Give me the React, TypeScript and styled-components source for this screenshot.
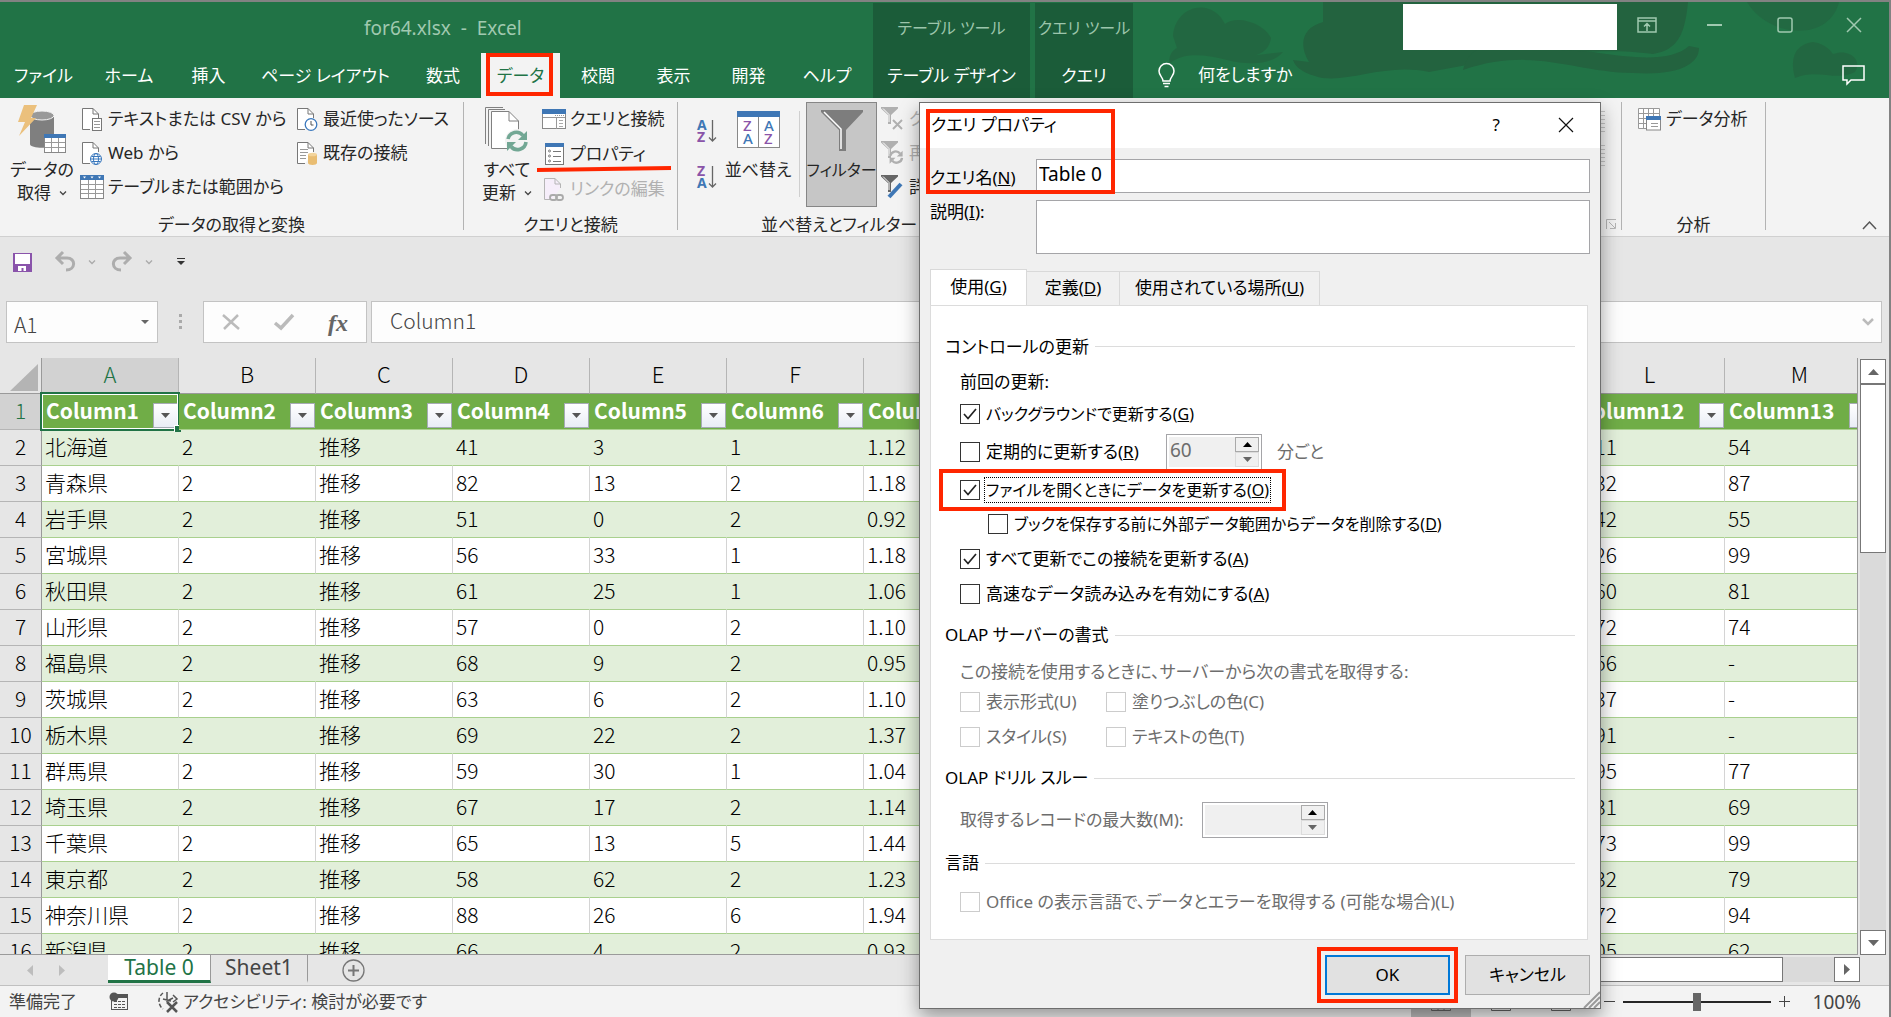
import React from "react";
import styled, { createGlobalStyle, css } from "styled-components";

const UI = `"Noto Sans", "Noto Sans CJK JP", sans-serif`;
const SHEET = `"Noto Sans CJK JP", sans-serif`;
const GREEN = "#217346";
const RED = "#ff2600";

const Global = createGlobalStyle`
  *, *::before, *::after { box-sizing: border-box; }
  body { margin: 0; background: #e6e6e6; }
  button, input, textarea { font: inherit; color: inherit; margin: 0; padding: 0; border: 0; background: none; border-radius: 0; font-feature-settings: inherit; }
  svg { display: block; flex: none; overflow: visible; }
`;

const Window = styled.div`
  position: relative;
  display: flex;
  flex-direction: column;
  height: 100vh;
  overflow: hidden;
  border-top: 2px solid #828282;
  border-right: 2px solid #828282;
  background: #e6e6e6;
  color: #262626;
  font-family: ${UI};
  font-size: 17px;
  line-height: 24px;
  font-feature-settings: "palt";
  white-space: nowrap;
`;

/* ---------- title bar and ribbon tabs ---------- */

const TopBar = styled.header`
  position: relative;
  display: flex;
  height: 96px;
  flex: none;
  background: ${GREEN};
  color: #fff;
`;
const Backdrop = styled.svg`
  position: absolute;
  right: 0;
  top: 0;
`;
const TabZone = styled.div`
  width: 873px;
  display: flex;
  flex-direction: column;
`;
const FileTitle = styled.div`
  height: 51px;
  padding: 14px 0 0 364px;
  color: #a0c9b0;
  font-size: 19px;
  white-space: pre;
`;
const TabRow = styled.nav`
  display: flex;
  flex: 1;
`;
const Tab = styled.button<{ $w: number; $on?: boolean }>`
  position: relative;
  width: ${(p) => p.$w}px;
  text-align: center;
  ${(p) => p.$on && css`background: #f3f3f3; color: ${GREEN};`}
`;
const ToolTabs = styled.div<{ $w: number }>`
  position: relative;
  display: flex;
  flex-direction: column;
  width: ${(p) => p.$w}px;
  margin: 1px 5px 0 0;
  background: #1b5c39;
`;
const ToolTitle = styled.div`
  height: 50px;
  padding-top: 13px;
  text-align: center;
  font-size: 16px;
  color: #9cc5ab;
`;
const ToolTab = styled.button`
  flex: 1;
`;
const RightTop = styled.div`
  position: relative;
  flex: 1;
  display: flex;
  flex-direction: column;
`;
const WindowRow = styled.div`
  display: flex;
  height: 50px;
  justify-content: flex-end;
`;
const Account = styled.div`
  width: 214px;
  height: 46px;
  margin-top: 2px;
  background: #fff;
`;
const WinButton = styled.button<{ $w: number }>`
  width: ${(p) => p.$w}px;
  height: 46px;
  display: flex;
  align-items: center;
  justify-content: center;
`;
const TellRow = styled.div`
  flex: 1;
  display: flex;
  align-items: center;
  gap: 23px;
  padding: 0 24px 0 20px;
`;
const CommentButton = styled.button`
  margin-left: auto;
`;

/* ---------- ribbon ---------- */

const Ribbon = styled.section`
  position: relative;
  display: flex;
  flex: none;
  height: 139px;
  padding: 4px 0 6px;
  background: #f3f3f3;
  border-bottom: 1px solid #d0d0d0;
`;
const Group = styled.div<{ $w?: number; $line?: boolean }>`
  display: flex;
  flex-direction: column;
  flex: ${(p) => (p.$w ? `0 0 ${p.$w}px` : "1 1 0")};
  min-width: 0;
  border-right: ${(p) => (p.$line ? "1px solid #b3b3b3" : "0")};
`;
const GroupBody = styled.div<{ $pad?: number }>`
  display: flex;
  flex: none;
  height: 105px;
  padding-left: ${(p) => p.$pad || 0}px;
`;
const GroupLabel = styled.div<{ $pad?: number }>`
  display: flex;
  justify-content: center;
  margin-top: 8px;
  padding-right: ${(p) => p.$pad || 0}px;
  line-height: 20px;
`;
const Large = styled.button<{ $w: number; $on?: boolean }>`
  display: flex;
  flex-direction: column;
  align-items: center;
  flex: none;
  width: ${(p) => p.$w}px;
  height: 105px;
  line-height: 23px;
  ${(p) => p.$on && css`background: #c6c6c6; border: 1px solid #868686; font-size: 16px;`}
`;
const LargeIcon = styled.span`
  display: flex;
  align-items: center;
  justify-content: center;
  height: 56px;
`;
const DropLine = styled.span`
  display: flex;
  align-items: center;
  gap: 8px;
`;
const Column = styled.div<{ $pad?: number; $gap?: number }>`
  display: flex;
  flex-direction: column;
  gap: ${(p) => p.$gap || 0}px;
  padding-left: ${(p) => p.$pad || 0}px;
`;
const Small = styled.button<{ $off?: boolean; $w?: number }>`
  display: flex;
  align-items: center;
  gap: 4px;
  height: 34px;
  width: ${(p) => (p.$w ? `${p.$w}px` : "auto")};
  color: ${(p) => (p.$off ? "#b1b1b1" : "inherit")};
`;
const IconBox = styled.span`
  display: flex;
  justify-content: center;
  width: 24px;
`;
const SortPair = styled.div`
  display: flex;
  flex-direction: column;
  gap: 22px;
  width: 47px;
  padding: 17px 0 0 19px;
`;
const InnerRule = styled.div`
  width: 1px;
  height: 86px;
  margin: 9px 6px 0 8px;
  background: #cfcfcf;
`;
const Collapse = styled.button`
  margin: auto 12px 0 auto;
`;

/* ---------- quick access and formula bar ---------- */

const Quick = styled.div`
  display: flex;
  flex: none;
  align-items: center;
  height: 64px;
  padding: 0 0 14px 13px;
  color: #a9a9a9;
`;
const QuickButton = styled.button<{ $w: number }>`
  width: ${(p) => p.$w}px;
`;
const FormulaRow = styled.div`
  display: flex;
  flex: none;
  height: 57px;
  padding: 0 7px 15px 6px;
  color: #444;
  font-family: ${SHEET};
  font-size: 21px;
  font-weight: 300;
`;
const Boxed = styled.div<{ $w?: number }>`
  display: flex;
  align-items: center;
  flex: ${(p) => (p.$w ? `0 0 ${p.$w}px` : "1 1 0")};
  min-width: 0;
  background: #fdfdfd;
  border: 1px solid #c3c3c3;
`;
const NameInput = styled.input`
  flex: 1;
  min-width: 0;
  padding: 3px 0 0 7px;
`;
const FormulaInput = styled.input`
  flex: 1;
  min-width: 0;
  padding: 0 0 4px 18px;
`;
const Dots = styled.div`
  width: 45px;
  display: flex;
  align-items: center;
  justify-content: center;
`;
const FxTools = styled.div`
  display: flex;
  flex: 1;
  align-items: center;
  justify-content: space-between;
  padding: 0 18px;
`;
const Fx = styled.span`
  font: italic bold 24px/24px "Liberation Serif", serif;
  color: #666;
`;
const Spacer = styled.div`
  width: 4px;
`;

/* ---------- grid ---------- */

const SheetArea = styled.main`
  display: flex;
  flex: 1;
  min-height: 0;
`;
const GridClip = styled.div`
  flex: 1;
  min-width: 0;
  overflow: hidden;
  border-right: 1px solid #9a9a9a;
  border-bottom: 1px solid #9a9a9a;
`;
const Grid = styled.table`
  width: 1875px;
  table-layout: fixed;
  border-collapse: separate;
  border-spacing: 0;
  font-family: ${SHEET};
  font-size: 21px;
  font-weight: 300;
  line-height: 30px;
  color: #000;
  font-feature-settings: normal;
`;
const Col = styled.col<{ $w: number }>`
  width: ${(p) => p.$w}px;
`;
const ColHead = styled.th<{ $on?: boolean }>`
  height: 36px;
  padding: 0 0 5px;
  font-size: 22px;
  font-weight: 300;
  border-right: 1px solid #b5b5b5;
  border-bottom: 1px solid #9a9a9a;
  background: ${(p) => (p.$on ? "#d2d2d2" : "#e6e6e6")};
  color: ${(p) => (p.$on ? GREEN : "#000")};
`;
const Corner = styled.td`
  padding: 4px 3px 0 10px;
  background: #e6e6e6;
  border-right: 1px solid #9a9a9a;
  border-bottom: 1px solid #9a9a9a;
`;
const RowHead = styled.th<{ $on?: boolean }>`
  height: 36px;
  padding: 0 0 4px;
  font-weight: 300;
  border-right: 1px solid #9a9a9a;
  border-bottom: 1px solid #b5b5b5;
  background: ${(p) => (p.$on ? "#d2d2d2" : "#e6e6e6")};
  color: ${(p) => (p.$on ? GREEN : "#000")};
`;
const FieldHead = styled.th`
  position: relative;
  height: 36px;
  padding: 0;
  background: #70ad47;
  border-bottom: 1px solid #a9d08e;
  color: #fff;
  font-weight: 700;
  text-align: left;
`;
const FieldInner = styled.div`
  display: flex;
  align-items: center;
  justify-content: space-between;
  padding: 0 1px 4px 4px;
  height: 35px;
`;
const FilterArrow = styled.button`
  display: flex;
  align-items: center;
  justify-content: center;
  width: 25px;
  height: 25px;
  margin-top: 11px;
  border: 1px solid #a6abb5;
  background: linear-gradient(#fff, #e9edf5);
`;
const Selection = styled.div`
  position: absolute;
  inset: -2px -1px -2px -2px;
  border: 2px solid ${GREEN};
  box-shadow: inset 0 0 0 1px #fff;
  pointer-events: none;
  &::after {
    content: "";
    position: absolute;
    right: -3px;
    bottom: -3px;
    width: 7px;
    height: 7px;
    background: ${GREEN};
    border-left: 1px solid #fff;
    border-top: 1px solid #fff;
  }
`;
const Cell = styled.td<{ $band: boolean }>`
  height: 36px;
  padding: 0 0 4px 3px;
  background: ${(p) => (p.$band ? "#e2efda" : "#fff")};
  border-bottom: 1px solid #a9d08e;
  border-right: 1px solid ${(p) => (p.$band ? "#e2efda" : "#d4d4d4")};
`;

const VScroll = styled.div`
  width: 31px;
  display: flex;
  flex-direction: column;
  padding: 1px 3px 0 2px;
`;
const ScrollButton = styled.button`
  display: flex;
  align-items: center;
  justify-content: center;
  width: 26px;
  height: 25px;
  flex: none;
  background: #fff;
  border: 1px solid #777;
`;
const VTrack = styled.div`
  flex: 1;
  background: #dadada;
`;
const VThumb = styled.div`
  height: 31%;
  background: #fff;
  border: 1px solid #777;
`;

/* ---------- sheet tabs and status bar ---------- */

const SheetBar = styled.div`
  display: flex;
  flex: none;
  height: 31px;
  border-bottom: 1px solid #c0c0c0;
  font-size: 21px;
`;
const SheetNav = styled.div`
  display: flex;
  align-items: center;
  gap: 26px;
  width: 108px;
  padding-left: 27px;
`;
const SheetTab = styled.button<{ $on?: boolean }>`
  width: ${(p) => (p.$on ? 103 : 97)}px;
  height: 28px;
  padding-bottom: 4px;
  border-right: 1px solid #999;
  border-bottom: 3px solid ${(p) => (p.$on ? GREEN : "transparent")};
  background: ${(p) => (p.$on ? "#fff" : "none")};
  color: ${(p) => (p.$on ? GREEN : "#444")};
`;
const AddSheet = styled.button`
  margin-left: 34px;
`;
const HScroll = styled.div`
  display: flex;
  width: 860px;
  height: 25px;
  margin: 2px 29px 0 auto;
`;
const HTrack = styled.div`
  flex: 1;
  background: #dadada;
`;
const HThumb = styled.div`
  width: 783px;
  height: 25px;
  background: #fff;
  border: 1px solid #777;
`;
const Status = styled.footer`
  display: flex;
  flex: none;
  align-items: center;
  height: 31px;
  padding: 0 28px 0 9px;
  background: #f3f3f3;
  color: #444;
`;
const StatusItem = styled.span<{ $w?: number }>`
  display: flex;
  align-items: center;
  gap: 4px;
  width: ${(p) => (p.$w ? `${p.$w}px` : "auto")};
`;
const Views = styled.div`
  display: flex;
  margin-left: auto;
  padding-right: 13px;
`;
const ViewButton = styled.button<{ $on?: boolean }>`
  display: flex;
  align-items: center;
  justify-content: center;
  width: 60px;
  height: 31px;
  background: ${(p) => (p.$on ? "#bdbdbd" : "transparent")};
`;
const Zoom = styled.div`
  display: flex;
  align-items: center;
  gap: 8px;
`;
const ZoomSlider = styled.input`
  appearance: none;
  width: 148px;
  height: 18px;
  background: linear-gradient(#262626, #262626) center / 100% 2px no-repeat;
  &::-webkit-slider-thumb {
    appearance: none;
    width: 8px;
    height: 18px;
    background: #666;
  }
`;
const ZoomValue = styled.span`
  width: 63px;
  font-size: 19px;
  text-align: right;
`;

/* ---------- dialog ---------- */

const Dialog = styled.section`
  position: absolute;
  left: 919px;
  top: 100px;
  width: 682px;
  display: flex;
  flex-direction: column;
  background: #f0f0f0;
  border: 1px solid #6e6e6e;
  box-shadow: 0 8px 18px rgba(0, 0, 0, 0.38);
  color: #000;
`;
const DialogTitle = styled.div`
  display: flex;
  align-items: center;
  height: 45px;
  padding: 0 26px 2px 11px;
  background: #fff;
`;
const DialogIcons = styled.div`
  display: flex;
  align-items: center;
  gap: 58px;
  margin-left: auto;
`;
const Fields = styled.div`
  display: grid;
  grid-template-columns: 106px 1fr;
  row-gap: 7px;
  padding: 11px 10px 0;
`;
const FieldLabel = styled.label<{ $top: number }>`
  padding-top: ${(p) => p.$top}px;
`;
const NameField = styled.input`
  height: 34px;
  min-width: 0;
  padding: 0 0 4px 2px;
  background: #fff;
  border: 1px solid #a5a5a8;
  font-size: 19px;
`;
const DescField = styled.textarea`
  height: 54px;
  resize: none;
  background: #fff;
  border: 1px solid #a5a5a8;
`;
const DialogTabs = styled.div`
  display: flex;
  align-items: flex-end;
  height: 36px;
  margin: 15px 0 0 10px;
`;
const DialogTab = styled.button<{ $on?: boolean; $w: number }>`
  width: ${(p) => p.$w}px;
  height: ${(p) => (p.$on ? 37 : 34)}px;
  margin-bottom: ${(p) => (p.$on ? -1 : 0)}px;
  padding-bottom: 2px;
  background: ${(p) => (p.$on ? "#fff" : "#f0f0f0")};
  border: 1px solid #d9d9d9;
  border-bottom: 0;
  border-left-width: ${(p) => (p.$on ? 1 : 0)}px;
`;
const Panel = styled.div`
  margin: 0 12px 0 10px;
  padding: 23px 12px 24px 14px;
  background: #fff;
  border: 1px solid #dcdcdc;
`;
const Heading = styled.h2<{ $h: number }>`
  display: flex;
  align-items: center;
  gap: 6px;
  height: ${(p) => p.$h}px;
  margin: 0;
  font-size: 17px;
  font-weight: 400;
  &::after {
    content: "";
    flex: 1;
    height: 1px;
    background: #dcdcdc;
  }
`;
const Line = styled.div<{ $h: number; $off?: boolean; $indent?: boolean; $dense?: boolean }>`
  position: relative;
  display: flex;
  align-items: center;
  height: ${(p) => p.$h}px;
  padding-left: ${(p) => (p.$indent ? 43 : 15)}px;
  color: ${(p) => (p.$off ? "#6d6d6d" : "#000")};
  font-size: ${(p) => (p.$dense ? 16 : 17)}px;
`;
const CheckLabel = styled.label<{ $w?: number }>`
  display: flex;
  align-items: center;
  gap: 5px;
  width: ${(p) => (p.$w ? `${p.$w}px` : "auto")};
`;
const CheckWrap = styled.span`
  position: relative;
  width: 20px;
  height: 20px;
`;
const CheckInput = styled.input`
  appearance: none;
  display: block;
  width: 20px;
  height: 20px;
  background: #fff;
  border: 1px solid #333;
  &:disabled { border-color: #ccc; }
`;
const Tick = styled.svg`
  position: absolute;
  left: 0;
  top: 0;
  pointer-events: none;
`;
const CheckText = styled.span<{ $focus?: boolean }>`
  outline: ${(p) => (p.$focus ? "1px dotted #000" : "0")};
  line-height: 24px;
  padding: 0 1px;
`;
const SpinBox = styled.span<{ $w: number; $ml: number }>`
  display: flex;
  width: ${(p) => p.$w}px;
  height: 36px;
  margin-left: ${(p) => p.$ml}px;
  padding: 2px;
  border: 1px solid #a5a5a8;
  background: #fff;
`;
const SpinInput = styled.input`
  flex: 1;
  min-width: 0;
  padding: 0 0 4px 1px;
  background: #f0f0f0;
  color: #6d6d6d;
  font-size: 19px;
`;
const SpinButtons = styled.span`
  display: flex;
  flex-direction: column;
  width: 24px;
  background: #f0f0f0;
`;
const SpinButton = styled.button<{ $up?: boolean }>`
  display: flex;
  align-items: center;
  justify-content: center;
  flex: 1;
  border: 1px solid ${(p) => (p.$up ? "#a9a9a9" : "#dcdcdc")};
`;
const Unit = styled.span`
  margin-left: 15px;
  color: #6d6d6d;
`;
const Footer = styled.div`
  display: flex;
  justify-content: flex-end;
  gap: 15px;
  padding: 15px 10px 13px 0;
`;
const PushButton = styled.button<{ $main?: boolean }>`
  position: relative;
  width: 125px;
  height: 40px;
  background: #e1e1e1;
  border: ${(p) => (p.$main ? "2px solid #0078d7" : "1px solid #adadad")};
`;
const Grip = styled.svg`
  position: absolute;
  right: 0;
  bottom: 0;
  overflow: hidden;
`;

/* ---------- red annotations ---------- */

const Mark = styled.span<{ $inset: string }>`
  position: absolute;
  inset: ${(p) => p.$inset};
  border: 4px solid ${RED};
  pointer-events: none;
`;
const Underline = styled.svg`
  position: absolute;
  left: 537px;
  top: 67px;
`;

/* ---------- icons ---------- */

const Chevron = ({ c = "#444", s = 8 }: { c?: string; s?: number }) => (
  <svg width={s} height={s} viewBox="0 0 8 8" fill="none" stroke={c} strokeWidth="1.3"><path d="M1 2.5 4 5.5 7 2.5" /></svg>
);
const Tri = ({ d, c = "#666", w = 11, h = 6 }: { d: "up" | "down" | "left" | "right"; c?: string; w?: number; h?: number }) => {
  const p = { up: `0,${h} ${w / 2},0 ${w},${h}`, down: `0,0 ${w},0 ${w / 2},${h}`, left: `${w},0 ${w},${h} 0,${h / 2}`, right: `0,0 ${w},${h / 2} 0,${h}` }[d];
  return <svg width={w} height={h}><polygon points={p} fill={c} /></svg>;
};
const Page = ({ children, off }: { children?: React.ReactNode; off?: boolean }) => (
  <svg width="22" height="25" viewBox="0 0 22 25" fill="none">
    <path d="M9 22.5H1.5V1.5H12L17.5 7V11" fill={off ? "#f6eefa" : "#fff"} stroke={off ? "#b5b5b5" : "#777"} />
    <path d="M12 1.5V7H17.5" stroke={off ? "#b5b5b5" : "#777"} />
    {children}
  </svg>
);
const TextFile = () => (
  <Page><rect x="11.5" y="11.5" width="9" height="12" fill="#fff" stroke="#777" /><path d="M13 14.5H19M13 17.5H19M13 20.5H19" stroke="#999" /></Page>
);
const WebFile = () => (
  <Page><circle cx="15" cy="18" r="5.5" fill="#fff" stroke="#3a78bd" /><path d="M9.5 18H20.5M10.5 15.5H19.5M10.5 20.5H19.5" stroke="#3a78bd" /><ellipse cx="15" cy="18" rx="2.5" ry="5.5" stroke="#3a78bd" /></Page>
);
const RecentFile = () => (
  <Page><circle cx="15" cy="17.5" r="5.8" fill="#fff" stroke="#3a78bd" strokeWidth="1.3" /><path d="M15 14V18H17.5" stroke="#555" /></Page>
);
const ExistingFile = () => (
  <Page><path d="M4 8.5H12M4 11.5H12M4 14.5H10M4 17.5H10" stroke="#999" /><path d="M12 13.5V22C12 24.5 21 24.5 21 22V13.5Z" fill="#e9bd72" /><ellipse cx="16.5" cy="13.5" rx="4.5" ry="1.8" fill="#f3d49b" /></Page>
);
const LinkFile = () => (
  <Page off><rect x="7" y="18" width="7" height="5" rx="2.5" stroke="#aaa" strokeWidth="1.8" /><rect x="13" y="18" width="7" height="5" rx="2.5" stroke="#aaa" strokeWidth="1.8" /></Page>
);
const TableIcon = () => (
  <svg width="24" height="24" fill="none"><rect x=".5" y=".5" width="23" height="23" fill="#fff" stroke="#888" /><rect width="24" height="5" fill="#3f77b5" /><path d="M3 1.5H6L4.5 3.5ZM10.5 1.5H13.5L12 3.5ZM18 1.5H21L19.5 3.5Z" fill="#fff" /><path d="M1 9.5H23M1 14.5H23M1 18.5H23M8.5 5V23M15.5 5V23" stroke="#999" /></svg>
);
const GetData = () => (
  <svg width="49" height="50" fill="none">
    <path d="M12 11V39C12 44 36 44 36 39V11Z" fill="#7f7f7f" />
    <ellipse cx="24" cy="10.5" rx="12" ry="4.5" fill="#999" stroke="#f3f3f3" />
    <path d="M6 0H19L13 13H18L1 31 7 17H0Z" fill="#ebc07c" />
    <rect x="26.5" y="29.5" width="21" height="18" fill="#fff" stroke="#888" /><rect x="26" y="29" width="22" height="4" fill="#3f77b5" />
    <path d="M27 37.5H47M27 42.5H47M33.5 33V47M40.5 33V47" stroke="#999" />
  </svg>
);
const RefreshArrows = ({ c, s, x, y }: { c: string; s: number; x: number; y: number }) => (
  <g transform={`translate(${x} ${y}) scale(${s})`}>
    <path d="M2 9A8.5 8.5 0 0 1 17 5.5" stroke={c} strokeWidth="3.6" fill="none" /><path d="M21 1V10H12Z" fill={c} />
    <path d="M20 12A8.5 8.5 0 0 1 5 16.5" stroke={c} strokeWidth="3.6" fill="none" /><path d="M1 21V12H10Z" fill={c} />
  </g>
);
const RefreshAll = () => (
  <svg width="44" height="46" fill="none" stroke="#808080">
    <path d="M.5 37V.5H18" /><path d="M3.5 39V2.5H20" />
    <path d="M6.5 41.5V4.5H24L33.5 14V41.5Z" fill="#fff" /><path d="M24 4.5V14H33.5" />
    <circle cx="32" cy="34" r="12" fill="#f3f3f3" stroke="none" />
    <g stroke="none"><RefreshArrows c="#72a794" s={1} x={21} y={23} /></g>
  </svg>
);
const QueriesIcon = () => (
  <svg width="24" height="21" fill="none"><rect x=".5" y=".5" width="23" height="19" fill="#fff" stroke="#888" /><rect width="24" height="5" fill="#3f77b5" /><path d="M1 8.5H23M14.5 9V20" stroke="#999" /><path d="M17 11.5H21M17 14.5H21M17 17.5H21" stroke="#aaa" /><path d="M13 6.5H22" stroke="#999" strokeDasharray="1 1" /></svg>
);
const PropsIcon = () => (
  <svg width="19" height="22" fill="none"><rect x=".5" y=".5" width="18" height="21" fill="#fff" stroke="#777" /><rect width="19" height="4" fill="#3f77b5" /><g stroke="#777"><circle cx="4.5" cy="8" r="1" /><circle cx="4.5" cy="13" r="1" /><circle cx="4.5" cy="18" r="1" /><path d="M8 8.5H16M8 13.5H16M8 18.5H16" /></g></svg>
);
const SortIcon = ({ desc }: { desc?: boolean }) => (
  <svg width="20" height="24" fontFamily="Noto Sans" fontWeight="700" fontSize="14">
    <text x="0" y="11" fill={desc ? "#8a54a8" : "#3f77b5"}>{desc ? "Z" : "A"}</text>
    <text x="0" y="23" fill={desc ? "#3f77b5" : "#8a54a8"}>{desc ? "A" : "Z"}</text>
    <path d="M15.5 1V22M12 18.5 15.5 22 19 18.5" stroke="#666" strokeWidth="1.3" fill="none" />
  </svg>
);
const SortDialog = () => (
  <svg width="43" height="38" fontFamily="Noto Sans" fontWeight="500" fontSize="15"><rect x=".5" y=".5" width="42" height="36" fill="#fff" stroke="#888" /><rect width="43" height="6" fill="#3f77b5" /><path d="M21.5 6V36" stroke="#888" />
    <text x="6" y="20" fill="#8a54a8">Z</text><text x="6" y="33" fill="#3f77b5">A</text><text x="27" y="20" fill="#3f77b5">A</text><text x="27" y="33" fill="#8a54a8">Z</text></svg>
);
const Funnel = () => (
  <svg width="42" height="42"><path d="M0 0H42V2L25 20V41H18V20L0 2Z" fill="#7d7d7d" /><path d="M3 2 20 19V39" stroke="#fff" strokeWidth="1.5" fill="none" /></svg>
);
const SmallFunnel = ({ kind }: { kind: "clear" | "again" | "more" }) => {
  const c = kind === "more" ? "#666" : "#b0b0b0";
  return (
    <svg width="24" height="24" fill="none"><path d="M0 0H17V1.5L10 8V17H7V8L0 1.5Z" fill={c} /><path d="M2 1.5 8 7.5V15" stroke="#fff" />
      {kind === "clear" && <path d="M12 13 21 22M21 13 12 22" stroke={c} strokeWidth="2" />}
      {kind === "again" && <RefreshArrows c={c} s={0.65} x={8} y={9} />}
      {kind === "more" && <path d="M8 22 20 9" stroke="#3f77b5" strokeWidth="4" />}</svg>
  );
};
const Analysis = () => (
  <svg width="24" height="23" fill="none"><path d="M.5 .5H21.5V20.5H.5ZM.5 5.5H21M.5 10.5H21M.5 15.5H21M5.5 .5V20M10.5 .5V20M15.5 .5V20" stroke="#999" fill="#fff" /><rect x="8.5" y="8.5" width="14" height="13.5" fill="#fff" stroke="#888" /><rect x="8" y="8" width="15" height="4" fill="#3f77b5" /><path d="M13 15.5H20M13 18.5H20" stroke="#999" /></svg>
);
const Hint = () => (
  <svg width="17" height="25" fill="none" stroke="#fff" strokeWidth="1.5"><path d="M5 18C5 14 1 13 1 8A7.5 7.5 0 0 1 16 8C16 13 12 14 12 18ZM5 20.5H12M6.5 23.5H10.5" /></svg>
);
const Undo = () => (
  <svg width="22" height="20" fill="none" stroke="#adadad" strokeWidth="3"><path d="M9 0 3 6 9 12M3 6H13C22 6 22 18 12 18" /></svg>
);
const Redo = () => (
  <svg width="22" height="20" fill="none" stroke="#adadad" strokeWidth="3"><path d="M13 0 19 6 13 12M19 6H9C0 6 0 18 10 18" /></svg>
);

/* ---------- data ---------- */

const columns: { letter: string; name: string; w: number }[] = [
  { letter: "A", name: "Column1", w: 137 },
  { letter: "B", name: "Column2", w: 137 },
  { letter: "C", name: "Column3", w: 137 },
  { letter: "D", name: "Column4", w: 137 },
  { letter: "E", name: "Column5", w: 137 },
  { letter: "F", name: "Column6", w: 137 },
  { letter: "", name: "Column7", w: 137 },
  { letter: "", name: "", w: 137 },
  { letter: "", name: "", w: 137 },
  { letter: "", name: "", w: 150 },
  { letter: "", name: "", w: 150 },
  { letter: "L", name: "Column12", w: 150 },
  { letter: "M", name: "Column13", w: 150 },
];
const rows: [string, string, string, string, string, string, string][] = [
  ["北海道", "41", "3", "1", "1.12", "1.11", "54"],
  ["青森県", "82", "13", "2", "1.18", "1.32", "87"],
  ["岩手県", "51", "0", "2", "0.92", "1.42", "55"],
  ["宮城県", "56", "33", "1", "1.18", "1.26", "99"],
  ["秋田県", "61", "25", "1", "1.06", "1.60", "81"],
  ["山形県", "57", "0", "2", "1.10", "1.72", "74"],
  ["福島県", "68", "9", "2", "0.95", "1.56", "-"],
  ["茨城県", "63", "6", "2", "1.10", "1.37", "-"],
  ["栃木県", "69", "22", "2", "1.37", "1.91", "-"],
  ["群馬県", "59", "30", "1", "1.04", "1.95", "77"],
  ["埼玉県", "67", "17", "2", "1.14", "1.31", "69"],
  ["千葉県", "65", "13", "5", "1.44", "1.73", "99"],
  ["東京都", "58", "62", "2", "1.23", "1.32", "79"],
  ["神奈川県", "88", "26", "6", "1.94", "1.72", "94"],
  ["新潟県", "66", "4", "2", "0.93", "1.05", "62"],
];
const tabs: [string, number][] = [
  ["ファイル", 87], ["ホーム", 84], ["挿入", 75], ["ページ レイアウト", 159], ["数式", 76], ["データ", 79],
  ["校閲", 76], ["表示", 75], ["開発", 75], ["ヘルプ", 82],
];

const Check = ({ text, k, checked, off, focus, w }: { text: string; k?: string; checked?: boolean; off?: boolean; focus?: boolean; w?: number }) => (
  <CheckLabel $w={w}>
    <CheckWrap>
      <CheckInput type="checkbox" defaultChecked={checked} disabled={off} />
      {checked && <Tick width="20" height="20" fill="none" stroke="#222" strokeWidth="1.7"><path d="M4 10 8 14.5 16 5" /></Tick>}
    </CheckWrap>
    <CheckText $focus={focus}>{text}{k && <>(<u>{k}</u>)</>}</CheckText>
  </CheckLabel>
);
const Spin = ({ value, w, ml, label }: { value: string; w: number; ml: number; label: string }) => (
  <SpinBox $w={w} $ml={ml}>
    <SpinInput aria-label={label} defaultValue={value} disabled />
    <SpinButtons>
      <SpinButton $up aria-label="増やす"><Tri d="up" c="#000" w={9} h={5} /></SpinButton>
      <SpinButton aria-label="減らす"><Tri d="down" w={9} h={5} /></SpinButton>
    </SpinButtons>
  </SpinBox>
);

function QueryDialog() {
  return (
    <Dialog role="dialog" aria-label="クエリ プロパティ">
      <DialogTitle>
        クエリ プロパティ
        <DialogIcons>
          <button>?</button>
          <button aria-label="閉じる"><svg width="16" height="16" stroke="#111" strokeWidth="1.2"><path d="M1 1 15 15M15 1 1 15" /></svg></button>
        </DialogIcons>
      </DialogTitle>
      <Fields>
        <FieldLabel htmlFor="qname" $top={7}>クエリ名(<u>N</u>)</FieldLabel>
        <NameField id="qname" defaultValue="Table 0" />
        <FieldLabel htmlFor="qdesc" $top={0}>説明(<u>I</u>):</FieldLabel>
        <DescField id="qdesc" />
      </Fields>
      <DialogTabs>
        <DialogTab $on $w={97}>使用(<u>G</u>)</DialogTab>
        <DialogTab $w={93}>定義(<u>D</u>)</DialogTab>
        <DialogTab $w={200}>使用されている場所(<u>U</u>)</DialogTab>
      </DialogTabs>
      <Panel>
        <Heading $h={35}>コントロールの更新</Heading>
        <Line $h={35}>前回の更新:</Line>
        <Line $h={30} $dense><Check checked text="バックグラウンドで更新する" k="G" /></Line>
        <Line $h={45}><Check w={191} text="定期的に更新する" k="R" /><Spin label="更新間隔" value="60" w={96} ml={15} /><Unit>分ごと</Unit></Line>
        <Line $h={32} $dense><Check checked focus text="ファイルを開くときにデータを更新する" k="O" /><Mark $inset="-5px 289px -5px -6px" /></Line>
        <Line $h={35} $indent $dense><Check text="ブックを保存する前に外部データ範囲からデータを削除する" k="D" /></Line>
        <Line $h={35}><Check checked text="すべて更新でこの接続を更新する" k="A" /></Line>
        <Line $h={35}><Check text="高速なデータ読み込みを有効にする" k="A" /></Line>
        <Heading $h={48}>OLAP サーバーの書式</Heading>
        <Line $h={25} $off>この接続を使用するときに、サーバーから次の書式を取得する:</Line>
        <Line $h={35} $off><Check off w={146} text="表示形式(U)" /><Check off text="塗りつぶしの色(C)" /></Line>
        <Line $h={35} $off><Check off w={146} text="スタイル(S)" /><Check off text="テキストの色(T)" /></Line>
        <Heading $h={48}>OLAP ドリル スルー</Heading>
        <Line $h={36} $off>取得するレコードの最大数(M):<Spin label="取得するレコードの最大数" value="" w={126} ml={18} /></Line>
        <Heading $h={50}>言語</Heading>
        <Line $h={27} $off><Check off text="Office の表示言語で、データとエラーを取得する (可能な場合)(L)" /></Line>
      </Panel>
      <Footer>
        <PushButton $main>OK<Mark $inset="-10px" /></PushButton>
        <PushButton>キャンセル</PushButton>
      </Footer>
      <Grip width="18" height="18" stroke="#9a9a9a" strokeWidth="2"><path d="M2 18 18 2M7 18 18 7M12 18 18 12" /></Grip>
      <Mark $inset="6px 485px 814px 6px" />
    </Dialog>
  );
}

export default function App() {
  return (
    <Window>
      <Global />
      <TopBar>
        <Backdrop width="756" height="96" fill="#23633f">
          <path d="M40 34C42 4 78 -6 92 22 104 12 132 22 138 36 136 50 124 54 116 54L150 50C140 62 118 64 94 58 70 52 50 50 36 62 36 52 40 48 44 46Z" opacity=".7" />
          <path d="M190 0H555C552 32 545 48 520 52 470 46 452 52 370 52L350 60 296 70C250 60 210 84 182 74 168 70 162 64 160 58L176 60C166 44 168 26 190 20Z" />
          <path d="M330 68C334 54 340 46 360 44L460 50C510 58 540 58 556 44L566 46C566 62 546 74 500 71 440 70 400 44 330 68Z" />
          <path d="M662 76C656 54 664 42 680 40 694 42 698 50 700 52 716 46 730 58 722 70 704 80 684 66 662 76Z" opacity=".7" />
          <path d="M614 0H706C700 24 676 34 648 26 630 20 620 10 614 0Z" opacity=".6" />
        </Backdrop>
        <TabZone>
          <FileTitle>{"for64.xlsx  -  Excel"}</FileTitle>
          <TabRow>
            {tabs.map(([t, w]) => (
              <Tab key={t} $w={w} $on={t === "データ"}>{t}{t === "データ" && <Mark $inset="0 7px 2px 5px" />}</Tab>
            ))}
          </TabRow>
        </TabZone>
        <ToolTabs $w={157}><ToolTitle>テーブル ツール</ToolTitle><ToolTab>テーブル デザイン</ToolTab></ToolTabs>
        <ToolTabs $w={98}><ToolTitle>クエリ ツール</ToolTitle><ToolTab>クエリ</ToolTab></ToolTabs>
        <RightTop>
          <WindowRow>
            <Account />
            <WinButton $w={60} aria-label="リボンの表示オプション"><svg width="20" height="16" fill="none" stroke="#a0c9b0" strokeWidth="1.5"><path d="M1 1H19V15H1ZM1 4H19M10 14V7M7 9.5 10 6.5 13 9.5" /></svg></WinButton>
            <WinButton $w={74} aria-label="最小化"><svg width="15" height="2"><path d="M0 1H15" stroke="#a0c9b0" strokeWidth="2" /></svg></WinButton>
            <WinButton $w={68} aria-label="最大化"><svg width="16" height="16" fill="none" stroke="#a0c9b0" strokeWidth="1.5"><rect x="1" y="1" width="14" height="14" rx="2" /></svg></WinButton>
            <WinButton $w={70} aria-label="閉じる"><svg width="16" height="16" stroke="#a0c9b0" strokeWidth="1.5"><path d="M1 1 15 15M15 1 1 15" /></svg></WinButton>
          </WindowRow>
          <TellRow>
            <Hint />
            <span>何をしますか</span>
            <CommentButton aria-label="コメント"><svg width="23" height="21" fill="none" stroke="#fff" strokeWidth="1.5"><path d="M1 1H22V15H9L5 19V15H1Z" /></svg></CommentButton>
          </TellRow>
        </RightTop>
      </TopBar>

      <Ribbon>
        <Group $w={464} $line>
          <GroupBody $pad={4}>
            <Large $w={76}><LargeIcon><GetData /></LargeIcon><span>データの</span><DropLine>取得<Chevron /></DropLine></Large>
            <Column>
              <Small $w={215}><IconBox><TextFile /></IconBox>テキストまたは CSV から</Small>
              <Small><IconBox><WebFile /></IconBox>Web から</Small>
              <Small><IconBox><TableIcon /></IconBox>テーブルまたは範囲から</Small>
            </Column>
            <Column>
              <Small><IconBox><RecentFile /></IconBox>最近使ったソース</Small>
              <Small><IconBox><ExistingFile /></IconBox>既存の接続</Small>
            </Column>
          </GroupBody>
          <GroupLabel>データの取得と変換</GroupLabel>
        </Group>
        <Group $w={214} $line>
          <GroupBody $pad={8}>
            <Large $w={70}><LargeIcon><RefreshAll /></LargeIcon><span>すべて</span><DropLine>更新<Chevron /></DropLine></Large>
            <Column $gap={1}>
              <Small><IconBox><QueriesIcon /></IconBox>クエリと接続</Small>
              <Small><IconBox><PropsIcon /></IconBox>プロパティ</Small>
              <Small $off><IconBox><LinkFile /></IconBox>リンクの編集</Small>
            </Column>
          </GroupBody>
          <GroupLabel>クエリと接続</GroupLabel>
        </Group>
        <Group>
          <GroupBody>
            <SortPair><SortIcon /><SortIcon desc /></SortPair>
            <Large $w={66}><LargeIcon><SortDialog /></LargeIcon>並べ替え</Large>
            <InnerRule />
            <Large $w={71} $on><LargeIcon><Funnel /></LargeIcon>フィルター</Large>
            <Column $pad={4}>
              <Small $off><IconBox><SmallFunnel kind="clear" /></IconBox>クリア</Small>
              <Small $off><IconBox><SmallFunnel kind="again" /></IconBox>再適用</Small>
              <Small><IconBox><SmallFunnel kind="more" /></IconBox>詳細設定</Small>
            </Column>
          </GroupBody>
          <GroupLabel $pad={600}>並べ替えとフィルター</GroupLabel>
        </Group>
        <Group $w={22} $line>
          <GroupBody>
            <svg width="5" height="100" stroke="#c4c4c4"><path d="M0 9.5H5M0 13.5H5M0 17.5H5M0 21.5H5M0 25.5H5M0 29.5H5M0 43.5H5M0 47.5H5M0 51.5H5M0 55.5H5M0 59.5H5M0 63.5H5" /></svg>
          </GroupBody>
          <GroupLabel><svg width="16" height="16" fill="none" stroke="#b5b5b5"><path d="M3.5 14V4.5H13M6 7 12 13M12.5 8V13.5H7" /></svg></GroupLabel>
        </Group>
        <Group $w={144} $line>
          <GroupBody $pad={16}><Column><Small><IconBox><Analysis /></IconBox>データ分析</Small></Column></GroupBody>
          <GroupLabel>分析</GroupLabel>
        </Group>
        <Group $w={123}>
          <Collapse aria-label="リボンを折りたたむ"><svg width="15" height="9" fill="none" stroke="#555" strokeWidth="1.5"><path d="M1 8 7.5 1 14 8" /></svg></Collapse>
        </Group>
        <Underline width="136" height="8"><path d="M0 5 134 3" stroke={RED} strokeWidth="4" /></Underline>
      </Ribbon>

      <Quick>
        <QuickButton $w={41} aria-label="保存"><svg width="19" height="19"><path d="M0 0H19V19H0Z" fill="#8a54ab" /><rect x="2" y="1" width="15" height="10" fill="#fff" /><path d="M5 13H13V18H10.5V15H8.5V18H5Z" fill="#fff" /></svg></QuickButton>
        <QuickButton $w={34} aria-label="元に戻す"><Undo /></QuickButton>
        <QuickButton $w={23} aria-label="元に戻す履歴"><Chevron c="#aaa" /></QuickButton>
        <QuickButton $w={34} aria-label="やり直し"><Redo /></QuickButton>
        <QuickButton $w={32} aria-label="やり直し履歴"><Chevron c="#aaa" /></QuickButton>
        <QuickButton $w={10} aria-label="カスタマイズ"><svg width="8" height="8"><path d="M0 .5H8" stroke="#333" /><path d="M0 3H8L4 7Z" fill="#333" /></svg></QuickButton>
      </Quick>

      <FormulaRow>
        <Boxed $w={152}><NameInput aria-label="名前ボックス" defaultValue="A1" /><Tri d="down" w={8} h={4} /><Spacer /><Spacer /></Boxed>
        <Dots><svg width="3" height="16" fill="#aaa"><rect width="3" height="3" /><rect y="6" width="3" height="3" /><rect y="12" width="3" height="3" /></svg></Dots>
        <Boxed $w={164}>
          <FxTools>
            <button aria-label="キャンセル"><svg width="18" height="16" stroke="#bbb" strokeWidth="2.5"><path d="M1 1 17 15M16 1 2 15" /></svg></button>
            <button aria-label="入力"><svg width="20" height="16" fill="none" stroke="#bbb" strokeWidth="3.5"><path d="M1 9 7 14 19 1" /></svg></button>
            <button><Fx>fx</Fx></button>
          </FxTools>
        </Boxed>
        <Spacer />
        <Boxed><FormulaInput aria-label="数式バー" defaultValue="Column1" /><svg width="26" height="8" fill="none" stroke="#bbb" strokeWidth="2.5"><path d="M8 1 13 6 18 1" /></svg></Boxed>
      </FormulaRow>

      <SheetArea>
        <GridClip>
          <Grid>
            <colgroup><Col $w={42} />{columns.map((c, i) => <Col key={i} $w={c.w} />)}</colgroup>
            <thead>
              <tr>
                <Corner><svg width="28" height="27"><path d="M28 0V27H0Z" fill="#b4b4b4" /></svg></Corner>
                {columns.map((c, i) => <ColHead key={i} $on={i === 0}>{c.letter}</ColHead>)}
              </tr>
            </thead>
            <tbody>
              <tr>
                <RowHead $on>1</RowHead>
                {columns.map((c, i) => (
                  <FieldHead key={i}>
                    <FieldInner>{c.name}<FilterArrow aria-label="フィルター"><Tri d="down" w={9} h={5} c="#555" /></FilterArrow></FieldInner>
                    {i === 0 && <Selection />}
                  </FieldHead>
                ))}
              </tr>
              {rows.map(([pref, d, e, f, g, l, m], i) => (
                <tr key={pref}>
                  <RowHead>{i + 2}</RowHead>
                  {[pref, "2", "推移", d, e, f, g, "", "", "", "", l, m].map((v, c) => <Cell key={c} $band={i % 2 === 0}>{v}</Cell>)}
                </tr>
              ))}
            </tbody>
          </Grid>
        </GridClip>
        <VScroll>
          <ScrollButton aria-label="上へ"><Tri d="up" /></ScrollButton>
          <VTrack><VThumb /></VTrack>
          <ScrollButton aria-label="下へ"><Tri d="down" /></ScrollButton>
        </VScroll>
      </SheetArea>

      <SheetBar>
        <SheetNav><Tri d="left" w={6} h={11} c="#bdbdbd" /><Tri d="right" w={6} h={11} c="#bdbdbd" /></SheetNav>
        <SheetTab $on>Table 0</SheetTab>
        <SheetTab>Sheet1</SheetTab>
        <AddSheet aria-label="新しいシート"><svg width="23" height="23" fill="none" stroke="#777"><circle cx="11.5" cy="11.5" r="10.5" strokeWidth="1.3" /><path d="M6 11.5H17M11.5 6V17" strokeWidth="2" /></svg></AddSheet>
        <HScroll><HTrack><HThumb /></HTrack><ScrollButton aria-label="右へ"><Tri d="right" w={6} h={11} /></ScrollButton></HScroll>
      </SheetBar>

      <Status>
        <StatusItem $w={100}>準備完了</StatusItem>
        <StatusItem $w={48}><svg width="20" height="19" fill="none"><rect x="2.5" y="2.5" width="16" height="15" stroke="#555" /><path d="M8 2H19V6H8Z" fill="#555" /><path d="M5 9.5H16M5 12.5H16M5 15.5H16" stroke="#555" strokeDasharray="3 1" /><circle cx="5" cy="5" r="4.5" fill="#555" /></svg></StatusItem>
        <StatusItem><svg width="22" height="22" fill="none" stroke="#555" strokeWidth="1.5"><path d="M6 2A10 10 0 0 0 6 18" strokeDasharray="4 2" /><path d="M10 1V10L16 7M6 8 14 10M16 4 20 8 16 11" /><path d="M10 11 20 21M20 11 10 21" strokeWidth="2.5" /></svg>アクセシビリティ: 検討が必要です</StatusItem>
        <Views>
          {["標準", "ページ レイアウト", "改ページ"].map((v, i) => (
            <ViewButton key={v} $on={i === 0} aria-label={v}><svg width="20" height="18" fill="none" stroke="#666"><path d="M.5 .5H19.5V17.5H.5Z" />{i === 0 && <path d="M7 0V18M13 0V18M0 6.5H20M0 12.5H20" />}</svg></ViewButton>
          ))}
        </Views>
        <Zoom>
          <button aria-label="縮小"><svg width="11" height="11" stroke="#444"><path d="M0 5.5H11" /></svg></button>
          <ZoomSlider type="range" aria-label="ズーム" defaultValue={50} />
          <button aria-label="拡大"><svg width="11" height="11" stroke="#444"><path d="M0 5.5H11M5.5 0V11" /></svg></button>
          <ZoomValue>100%</ZoomValue>
        </Zoom>
      </Status>

      <QueryDialog />
    </Window>
  );
}
